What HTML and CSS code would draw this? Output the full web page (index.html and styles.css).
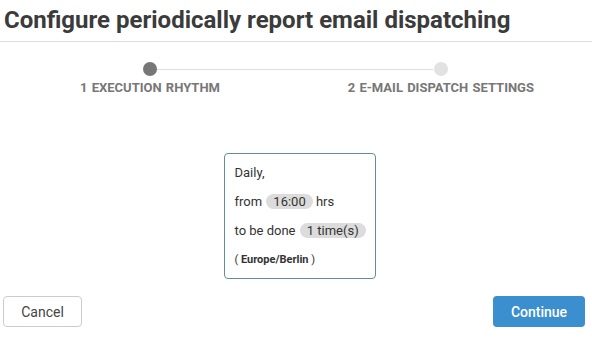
FILE: index.html
```html
<!DOCTYPE html>
<html lang="en">

<head>
    <meta charset="UTF-8">
    <meta name="viewport" content="width=device-width, initial-scale=1.0">
    <title>Configure periodically report email dispatching</title>
    <link rel="stylesheet" href="styles.css">
</head>

<body>

    <header class="dialog-header">
        <h1>Configure periodically report email dispatching</h1>
    </header>

    <div class="stepper">
        <div class="step step-active">
            <span class="step-dot"></span>
            <span class="step-label">1 EXECUTION RHYTHM</span>
        </div>
        <div class="step step-next">
            <span class="step-dot"></span>
            <span class="step-label">2 E-MAIL DISPATCH SETTINGS</span>
        </div>
    </div>

    <div class="summary-container">
        <div class="summary">
            <div class="summary-line">Daily,</div>
            <div class="summary-line">from <span class="pill">16:00</span> hrs</div>
            <div class="summary-line">to be done <span class="pill">1 time(s)</span></div>
            <div class="summary-line summary-tz">( <b>Europe/Berlin</b> )</div>
        </div>
    </div>

    <div class="actions">
        <button type="button" class="btn btn-cancel">Cancel</button>
        <button type="button" class="btn btn-continue">Continue</button>
    </div>

</body>

</html>
```

FILE: styles.css
```css
body {
    font-family: Roboto, 'Liberation Sans', Arial, sans-serif;
    background-color: #fff;
    margin: 0;
    width: 592px;
    height: 337px;
    overflow: hidden;
    color: #333;
}

.dialog-header {
    border-bottom: 1px solid #ddd;
    padding: 6px 4px 7px;
}

.dialog-header h1 {
    margin: 0;
    font-size: 24px;
    line-height: 28px;
    font-weight: 700;
    color: #3b3b3b;
}

.stepper {
    position: relative;
    display: flex;
    justify-content: space-between;
    padding: 20px 58px 0 80px;
    height: 34px;
}

.stepper::before {
    content: "";
    position: absolute;
    left: 156px;
    right: 159px;
    top: 27px;
    border-top: 1px solid #ddd;
}

.step {
    display: flex;
    flex-direction: column;
    align-items: center;
}

.step-dot {
    position: relative;
    width: 14px;
    height: 14px;
    border-radius: 50%;
    background-color: #777;
}

.step-next .step-dot {
    background-color: #e2e2e2;
}

.step-label {
    margin-top: 4px;
    font-size: 13px;
    font-weight: 700;
    color: #777;
    word-spacing: 1px;
}

.summary-container {
    display: flex;
    justify-content: center;
    padding-top: 57px;
}

.summary {
    width: 152px;
    height: 126px;
    box-sizing: border-box;
    margin-left: 7px;
    border: 1px solid #5e8f9b;
    border-radius: 4px;
    padding: 10px 6px 0 10px;
    font-size: 13px;
    white-space: nowrap;
}

.summary-line {
    height: 29px;
    line-height: 18px;
}

.summary-tz {
    font-size: 11px;
}

.summary-tz b {
    font-weight: 700;
}

.pill {
    display: inline-block;
    background-color: #dcdcdc;
    border-radius: 8px;
    padding: 0 7px;
    line-height: 15px;
    margin-left: 1px;
}

.actions {
    display: flex;
    justify-content: space-between;
    padding: 17px 7px 0 3px;
}

.btn {
    font-family: Roboto, 'Liberation Sans', Arial, sans-serif;
    font-size: 14px;
    height: 31px;
    border-radius: 4px;
    cursor: pointer;
}

.btn-cancel {
    width: 79px;
    background-color: #fff;
    border: 1px solid #ccc;
    color: #444;
}

.btn-continue {
    width: 92px;
    background-color: #3b8fce;
    border: none;
    color: #fff;
    font-weight: 500;
}
```
